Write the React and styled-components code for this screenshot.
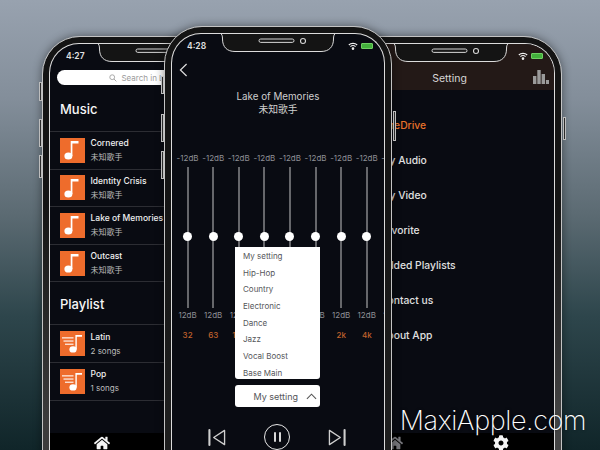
import React from 'react';
import styled, {createGlobalStyle} from 'styled-components';
import {FaHome, FaCog} from 'react-icons/fa';

const songs = [
    {title: 'Cornered', sub: '未知歌手'},
    {title: 'Identity Crisis', sub: '未知歌手'},
    {title: 'Lake of Memories', sub: '未知歌手'},
    {title: 'Outcast', sub: '未知歌手'},
];
const playlists = [
    {title: 'Latin', sub: '2 songs'},
    {title: 'Pop', sub: '1 songs'},
];
const bands = ['32', '63', '125', '250', '500', '1k', '2k', '4k', '8k'];
const presets = ['My setting', 'Hip-Hop', 'Country', 'Electronic', 'Dance', 'Jazz', 'Vocal Boost', 'Base Main'];
const settings = ['OneDrive', 'My Audio', 'My Video', 'Favorite', 'Added Playlists', 'Contact us', 'About App'];

const App = () => {
    return (
        <>
            <GlobalStyle/>
            <Stage>
                {/* Left phone */}
                <Phone $left={42} $top={36} $width={222} $z={1} $bezel="#3c3c3c">
                    <SideButton $side="left" $top={45} $height={19}/>
                    <SideButton $side="left" $top={82} $height={28}/>
                    <SideButton $side="left" $top={118} $height={23}/>
                    <Screen>
                        <Notch $shift={2}/>
                        <StatusBar>
                            <Time $pad={16}>4:27</Time>
                        </StatusBar>
                        <SearchBar>
                            <SearchIcon/>
                            Search in Library
                        </SearchBar>
                        <SectionTitle>Music</SectionTitle>
                        <List>
                            {songs.map(song => (
                                <Row key={song.title}>
                                    <Cover><NoteIcon/></Cover>
                                    <RowText>
                                        <RowTitle>{song.title}</RowTitle>
                                        <RowSub>{song.sub}</RowSub>
                                    </RowText>
                                </Row>
                            ))}
                        </List>
                        <SectionTitle $second>Playlist</SectionTitle>
                        <List>
                            {playlists.map(item => (
                                <Row key={item.title}>
                                    <Cover><PlaylistIcon/></Cover>
                                    <RowText>
                                        <RowTitle>{item.title}</RowTitle>
                                        <RowSub>{item.sub}</RowSub>
                                    </RowText>
                                </Row>
                            ))}
                        </List>
                        <TabBar>
                            <TabCell><FaHome size={16} color="#f4f4f4"/></TabCell>
                            <TabCell><FaCog size={15} color="#777"/></TabCell>
                        </TabBar>
                    </Screen>
                </Phone>

                {/* Right phone */}
                <Phone $left={334} $top={36} $width={228} $z={1} $bezel="#444">
                    <SideButton $side="right" $top={80} $height={23}/>
                    <Screen>
                        <Header>
                            <Notch $shift={3}/>
                            <StatusBar>
                                <StatusIcons/>
                            </StatusBar>
                            <HeaderRow>
                                <HeaderTitle>Setting</HeaderTitle>
                                <BarsIcon/>
                            </HeaderRow>
                        </Header>
                        <SettingList>
                            {settings.map((item, i) => (
                                <SettingItem key={item} $active={i === 0}>{item}</SettingItem>
                            ))}
                        </SettingList>
                        <TabBar>
                            <TabCell><FaHome size={16} color="#77777c"/></TabCell>
                            <TabCell><FaCog size={16} color="#f4f4f4"/></TabCell>
                        </TabBar>
                    </Screen>
                </Phone>

                {/* Center phone */}
                <Phone $left={164} $top={26} $width={228} $z={2} $bezel="#1e1e1e">
                    <SideButton $side="left" $top={49} $height={18}/>
                    <SideButton $side="left" $top={87} $height={28}/>
                    <SideButton $side="left" $top={124} $height={28}/>
                    <SideButton $side="right" $top={84} $height={30}/>
                    <Screen>
                        <Notch $shift={0}/>
                        <StatusBar>
                            <Time $pad={15}>4:28</Time>
                            <StatusIcons/>
                        </StatusBar>
                        <BackRow>
                            <BackIcon/>
                        </BackRow>
                        <TrackTitle>Lake of Memories<br/>未知歌手</TrackTitle>
                        <Equalizer>
                            {bands.map(band => (
                                <Band key={band}>
                                    <BandLabel>-12dB</BandLabel>
                                    <Track><Thumb/></Track>
                                    <BandLabel>12dB</BandLabel>
                                    <BandFreq>{band}</BandFreq>
                                </Band>
                            ))}
                        </Equalizer>
                        <SelectArea>
                            <Menu>
                                {presets.map(name => (
                                    <MenuItem key={name}>{name}</MenuItem>
                                ))}
                            </Menu>
                            <Select>
                                My setting
                                <svg width="11" height="7" viewBox="0 0 12 7" fill="none" stroke="#555" strokeWidth="1.2">
                                    <path d="M1 6 L6 1 L11 6"/>
                                </svg>
                            </Select>
                        </SelectArea>
                        <Controls>
                            <svg width="18" height="19" viewBox="0 0 19 19" fill="none" stroke="#cfcfcf" strokeWidth="1.4" strokeLinejoin="round">
                                <path d="M1.5 1.5 V17.5" strokeWidth="2.2" strokeLinecap="round"/>
                                <path d="M17.5 2 L6 9.5 L17.5 17 Z"/>
                            </svg>
                            <PauseButton>
                                <PauseBar/>
                                <PauseBar/>
                            </PauseButton>
                            <svg width="18" height="19" viewBox="0 0 19 19" fill="none" stroke="#cfcfcf" strokeWidth="1.4" strokeLinejoin="round">
                                <path d="M17.5 1.5 V17.5" strokeWidth="2.2" strokeLinecap="round"/>
                                <path d="M1.5 2 L13 9.5 L1.5 17 Z"/>
                            </svg>
                        </Controls>
                    </Screen>
                </Phone>

                <Watermark>MaxiApple.com</Watermark>
            </Stage>
        </>
    );
};

//Drawn parts
const Notch = ({$shift}) => (
    <NotchWrap $shift={$shift}>
        <svg width="118" height="20" viewBox="0 0 118 20">
            <path d="M1 0 C3 1 3.5 3 3.5 6 C3.5 14 8 18.5 16 18.5 H102 C110 18.5 114.5 14 114.5 6 C114.5 3 115 1 117 0 Z" fill="#141414" stroke="#dcdcdc" strokeWidth="1"/>
            <rect x="40" y="6" width="35" height="3.4" rx="1.7" fill="#1a1a1a" stroke="#d4d4d4" strokeWidth="1"/>
            <circle cx="84" cy="8" r="2.5" fill="#111" stroke="#d4d4d4" strokeWidth="1.1"/>
        </svg>
    </NotchWrap>
);

const StatusIcons = () => (
    <StatusRight>
        <svg width="10" height="8" viewBox="0 0 10 8" fill="none" stroke="#f0f0f0" strokeWidth="1.1">
            <path d="M0.8 3 C3 0.8 7 0.8 9.2 3"/>
            <path d="M2.4 4.6 C3.8 3.4 6.2 3.4 7.6 4.6"/>
            <circle cx="5" cy="6.6" r="0.8" fill="#f0f0f0"/>
        </svg>
        <Battery/>
    </StatusRight>
);

const SearchIcon = () => (
    <svg width="8" height="8" viewBox="0 0 8 8" fill="none" stroke="#aaa" strokeWidth="1">
        <circle cx="3.2" cy="3.2" r="2.4"/>
        <path d="M5 5 L7.4 7.4"/>
    </svg>
);

const NoteIcon = () => (
    <svg width="16" height="20" viewBox="0 0 16 20" fill="#fff">
        <ellipse cx="4.4" cy="16" rx="4" ry="3.6"/>
        <path d="M6.7 16 V1 H14.5 V3.4 H8.4 V16 Z"/>
    </svg>
);

const PlaylistIcon = () => (
    <svg width="21" height="19" viewBox="0 0 21 19" fill="#fff">
        <ellipse cx="11" cy="15.4" rx="3.6" ry="3.2"/>
        <path d="M13.4 15.4 V1 H20 V2.8 H14.8 V15.4 Z"/>
        <rect x="0" y="3.2" width="11.5" height="1.3" opacity="0.85"/>
        <rect x="1.5" y="6.4" width="10" height="1.3" opacity="0.85"/>
        <rect x="3" y="9.6" width="8.5" height="1.3" opacity="0.85"/>
    </svg>
);

const BackIcon = () => (
    <svg width="9" height="14" viewBox="0 0 9 14" fill="none" stroke="#dedede" strokeWidth="1.2">
        <path d="M7.6 1 L1.4 7 L7.6 13"/>
    </svg>
);

const BarsIcon = () => (
    <BarsWrap>
        <svg width="16" height="14" viewBox="0 0 16 14" fill="#9a9a9a">
            <rect x="0" y="6" width="3.4" height="8"/>
            <rect x="4.3" y="0" width="3.4" height="14"/>
            <rect x="8.6" y="4" width="3.4" height="10"/>
            <rect x="12.9" y="10" width="3.1" height="4"/>
        </svg>
    </BarsWrap>
);

//Styles
const GlobalStyle = createGlobalStyle`
    html, body {
        margin: 0;
        padding: 0;
        background: #111;
    }
    * {
        box-sizing: border-box;
    }
`;

const Stage = styled.div`
    position: relative;
    width: 600px;
    height: 450px;
    overflow: hidden;
    font-family: Inter, Roboto, "Noto Sans CJK SC", sans-serif;
    background: linear-gradient(180deg, #98a2af 0%, #838e9a 22%, #5b6a72 48%, #2e464c 70%, #102529 100%);
`;

const Phone = styled.div`
    position: absolute;
    left: ${p => p.$left}px;
    top: ${p => p.$top}px;
    z-index: ${p => p.$z};
    width: ${p => p.$width}px;
    height: 480px;
    padding: 6px;
    background: linear-gradient(180deg, #141414 35%, ${p => p.$bezel} 80%);
    border: 1.5px solid #c4c4c4;
    border-radius: 38px;
    box-shadow: 0 0 10px rgba(0,0,0,0.45);
`;

const SideButton = styled.div`
    position: absolute;
    ${p => p.$side}: -4.5px;
    top: ${p => p.$top}px;
    width: 3px;
    height: ${p => p.$height}px;
    background: #2a2a2a;
    border: 1px solid #bdbdbd;
`;

const Screen = styled.div`
    position: relative;
    display: flex;
    flex-direction: column;
    height: 430px;
    overflow: hidden;
    color: #f0f0f0;
    background: #090b12;
    border: 1.5px solid #dcdcdc;
    border-bottom: none;
    border-radius: 30px 30px 0 0;
`;

const NotchWrap = styled.div`
    position: absolute;
    top: -1px;
    left: calc(50% - 59px + ${p => p.$shift}px);
    z-index: 3;
    height: 20px;
    svg {
        display: block;
    }
`;

const StatusBar = styled.div`
    display: flex;
    flex: none;
    align-items: center;
    justify-content: space-between;
    height: 22px;
    padding-top: 2px;
`;

const Time = styled.span`
    padding-left: ${p => p.$pad}px;
    font-size: 8.5px;
    font-weight: 600;
    color: #e2e2e2;
`;

const StatusRight = styled.div`
    display: flex;
    align-items: center;
    gap: 3px;
    margin-left: auto;
    padding-right: 11px;
`;

const Battery = styled.div`
    width: 12px;
    height: 6px;
    background: #43b03c;
    border: 1px solid #6fcf63;
    border-radius: 1px;
`;

const SearchBar = styled.div`
    display: flex;
    flex: none;
    align-items: center;
    justify-content: center;
    gap: 4px;
    height: 15px;
    margin: 4px 18px 0 7px;
    font-size: 8px;
    color: #9b9b9b;
    background: #fff;
    border-radius: 8px;
`;

const SectionTitle = styled.div`
    flex: none;
    height: ${p => (p.$second ? '42px' : '46px')};
    padding-left: 10px;
    padding-top: ${p => (p.$second ? '14px' : '16px')};
    font-size: 13px;
    font-weight: 500;
    color: #f6f6f6;
`;

const List = styled.div`
    flex: none;
    border-top: 1px solid #2c2d33;
`;

const Row = styled.div`
    display: flex;
    align-items: center;
    gap: 6px;
    height: 37.6px;
    padding-left: 9.5px;
    border-bottom: 1px solid #2c2d33;
`;

const Cover = styled.div`
    display: flex;
    flex: none;
    align-items: center;
    justify-content: center;
    width: 25px;
    height: 25px;
    background: #ee6c2c;
`;

const RowText = styled.div`
    display: flex;
    flex-direction: column;
    gap: 4px;
    white-space: nowrap;
`;

const RowTitle = styled.div`
    font-size: 8.5px;
    font-weight: 500;
    line-height: 10px;
    color: #f0f0f0;
`;

const RowSub = styled.div`
    font-size: 8px;
    line-height: 10px;
    color: #bdbdbd;
`;

const TabBar = styled.div`
    display: flex;
    flex: none;
    margin-top: auto;
    height: 40px;
    background: #000;
`;

const TabCell = styled.div`
    display: flex;
    flex: 1;
    justify-content: center;
    padding-top: 2px;
`;

const BackRow = styled.div`
    flex: none;
    height: 27px;
    padding: 5px 0 0 7px;
`;

const TrackTitle = styled.div`
    flex: none;
    height: 69px;
    padding-top: 7px;
    font-size: 9.8px;
    line-height: 13px;
    text-align: center;
    color: #cfcfcf;
`;

const Equalizer = styled.div`
    display: flex;
    flex: none;
    height: 192px;
    padding-left: 2.8px;
`;

const Band = styled.div`
    display: flex;
    flex: none;
    flex-direction: column;
    align-items: center;
    width: 25.6px;
`;

const BandLabel = styled.div`
    height: 13px;
    font-size: 8px;
    line-height: 13px;
    white-space: nowrap;
    color: #8f9096;
`;

const Track = styled.div`
    position: relative;
    width: 2px;
    height: 141px;
    margin: 2px 0 1px;
    background: #66676b;
`;

const Thumb = styled.div`
    position: absolute;
    top: 65px;
    left: -3.5px;
    width: 9px;
    height: 9px;
    background: #fff;
    border-radius: 50%;
`;

const BandFreq = styled.div`
    margin-top: 7px;
    font-size: 8px;
    font-weight: 500;
    line-height: 12px;
    color: #c2622c;
`;

const SelectArea = styled.div`
    position: relative;
    flex: none;
    width: 85px;
    margin: 41px 0 0 63px;
`;

const Menu = styled.div`
    position: absolute;
    bottom: 28px;
    left: 0;
    z-index: 2;
    display: flex;
    flex-direction: column;
    width: 85px;
    height: 132px;
    padding: 1px 0 0 8px;
    background: #fff;
    border-radius: 0 0 3px 3px;
`;

const MenuItem = styled.div`
    height: 16.7px;
    font-size: 8px;
    line-height: 17px;
    color: #55565a;
`;

const Select = styled.div`
    display: flex;
    align-items: center;
    justify-content: flex-end;
    gap: 8px;
    height: 22px;
    padding-right: 3px;
    font-size: 9px;
    color: #55565a;
    background: #fff;
    border-radius: 3px;
`;

const Controls = styled.div`
    display: flex;
    flex: none;
    align-items: center;
    justify-content: space-between;
    width: 138px;
    margin: 17px 0 0 36px;
`;

const PauseButton = styled.div`
    display: flex;
    align-items: center;
    justify-content: center;
    gap: 3px;
    width: 26px;
    height: 26px;
    border: 1.5px solid #e8e8e8;
    border-radius: 50%;
`;

const PauseBar = styled.div`
    width: 2px;
    height: 10px;
    background: #d8d8d8;
    border-radius: 1px;
`;

const Header = styled.div`
    flex: none;
    height: 46px;
    background: #231917;
`;

const HeaderRow = styled.div`
    position: relative;
    display: flex;
    align-items: center;
    justify-content: center;
    height: 24px;
    padding-left: 3px;
`;

const HeaderTitle = styled.div`
    font-size: 10.5px;
    color: #d6d6d6;
`;

const BarsWrap = styled.div`
    position: absolute;
    top: 4px;
    right: 5px;
    svg {
        display: block;
    }
`;

const SettingList = styled.div`
    flex: none;
    padding: 18px 0 0 38px;
`;

const SettingItem = styled.div`
    height: 35px;
    font-size: 10.3px;
    font-weight: 500;
    line-height: 35px;
    white-space: nowrap;
    color: ${p => (p.$active ? '#e8722a' : '#e0e0e0')};
`;

const Watermark = styled.div`
    position: absolute;
    right: 14px;
    bottom: 14px;
    z-index: 5;
    font-family: Inter, sans-serif;
    font-size: 27px;
    font-weight: 200;
    letter-spacing: -0.4px;
    line-height: 30px;
    color: #fff;
    text-shadow: 0 0 3px rgba(0,0,0,0.5);
`;

export default App;
